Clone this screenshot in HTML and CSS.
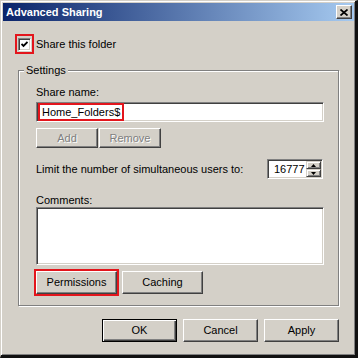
FILE: index.html
```html
<!DOCTYPE html>
<html lang="en">
<head>
    <meta charset="UTF-8">
    <meta name="viewport" content="width=device-width, initial-scale=1.0">
    <title>Advanced Sharing</title>
    <link rel="stylesheet" href="styles.css">
</head>
<body>
    <div class="window">
        <div class="titlebar">
            <span class="title">Advanced Sharing</span>
            <button class="close" aria-label="Close">
                <svg width="8" height="7" viewBox="0 0 8 7"><path d="M0.5 0.5 L7.5 6.5 M7.5 0.5 L0.5 6.5" stroke="#000" stroke-width="1.7" fill="none"/></svg>
            </button>
        </div>
        <div class="content">
            <div class="share-row">
                <span class="hl-box">
                    <span class="checkbox">
                        <svg width="7" height="7" viewBox="0 0 7 7"><path d="M0.5 3 L2.5 5 L6.5 1" stroke="#000" stroke-width="1.8" fill="none"/></svg>
                    </span>
                </span>
                <span class="share-text">Share this folder</span>
            </div>

            <fieldset class="group">
                <legend>Settings</legend>
                <div class="label">Share name:</div>
                <div class="field name-field"><span class="hl">Home_Folders$</span></div>
                <div class="btn-row">
                    <button class="btn small" disabled>Add</button>
                    <button class="btn small" disabled>Remove</button>
                </div>
                <div class="limit-row">
                    <span>Limit the number of simultaneous users to:</span>
                    <div class="field spinner">
                        <span class="spin-text">16777</span>
                        <span class="spin-btns">
                            <span class="spin-btn"><svg width="5" height="3" viewBox="0 0 5 3"><path d="M2.5 0 L5 3 L0 3 Z" fill="#000"/></svg></span>
                            <span class="spin-btn"><svg width="5" height="3" viewBox="0 0 5 3"><path d="M0 0 L5 0 L2.5 3 Z" fill="#000"/></svg></span>
                        </span>
                    </div>
                </div>
                <div class="label comments-label">Comments:</div>
                <div class="field comments"></div>
                <div class="btn-row perm-row">
                    <button class="btn mid hl-btn">Permissions</button>
                    <button class="btn mid">Caching</button>
                </div>
            </fieldset>

            <div class="footer">
                <button class="btn big default">OK</button>
                <button class="btn big">Cancel</button>
                <button class="btn big">Apply</button>
            </div>
        </div>
    </div>
</body>
</html>
```

FILE: styles.css
```css
body {
    margin: 0;
    font-family: 'Liberation Sans', Arial, sans-serif;
    font-size: 11px;
    line-height: 13px;
    color: #000;
}
.window {
    width: 358px;
    height: 358px;
    box-sizing: border-box;
    background: #d4d0c8;
    border-style: solid;
    border-width: 1px 3px 3px 1px;
    border-color: #d4d0c8 #111 #111 #d4d0c8;
    box-shadow: inset 1px 1px #fff, inset -1px -1px #808080;
    padding: 2px 1px 0 2px;
}
.titlebar {
    height: 18px;
    display: flex;
    align-items: center;
    justify-content: space-between;
    background: linear-gradient(to right, #0a246a, #a6caf0);
    padding-left: 3px;
}
.title {
    color: #fff;
    font-weight: bold;
}
.close {
    width: 16px;
    height: 14px;
    margin-right: 2px;
    padding: 0;
    display: flex;
    align-items: center;
    justify-content: center;
    background: #d4d0c8;
    border: 1px solid;
    border-color: #fff #404040 #404040 #fff;
    box-shadow: inset -1px -1px #808080;
}
.content {
    padding: 13px 0 0 12px;
}
.share-row {
    display: flex;
    align-items: center;
    height: 20px;
}
.hl-box {
    width: 19px;
    height: 20px;
    box-sizing: border-box;
    border: 2px solid #e3151c;
    display: flex;
    align-items: center;
    justify-content: center;
}
.checkbox {
    width: 13px;
    height: 13px;
    box-sizing: border-box;
    background: #fff;
    border: 1px solid;
    border-color: #808080 #fff #fff #808080;
    box-shadow: inset 1px 1px #404040, inset -1px -1px #d4d0c8;
    display: flex;
    align-items: center;
    justify-content: center;
}
.share-text {
    margin-left: 2px;
}
.group {
    margin: 10px 0 0 3px;
    width: 321px;
    box-sizing: border-box;
    padding: 0 0 11px 17px;
    border: 1px solid #808080;
    box-shadow: inset 1px 1px #fff, 1px 1px #fff;
}
.group legend {
    padding: 0 2px;
    margin-left: -12px;
    background: #d4d0c8;
}
.label {
    margin-top: 9px;
}
.field {
    box-sizing: border-box;
    background: #fff;
    border: 1px solid;
    border-color: #808080 #fff #fff #808080;
    box-shadow: inset 1px 1px #404040, inset -1px -1px #d4d0c8;
}
.name-field {
    margin-top: 3px;
    width: 288px;
    height: 20px;
    display: flex;
    padding-left: 1px;
}
.hl {
    border: 2px solid #e3151c;
    padding: 0 2px;
    display: flex;
    align-items: center;
}
.btn {
    font: inherit;
    color: #000;
    padding: 0;
    background: #d4d0c8;
    border: 1px solid;
    border-color: #fff #404040 #404040 #fff;
    box-shadow: inset -1px -1px #808080;
}
.btn:disabled {
    color: #808080;
    text-shadow: 1px 1px #fff;
}
.btn-row {
    display: flex;
    gap: 1px;
    margin-top: 6px;
}
.small { width: 62px; height: 20px; }
.mid { width: 81px; height: 23px; }
.big { width: 75px; height: 23px; }
.limit-row {
    margin-top: 11px;
    width: 287px;
    display: flex;
    align-items: center;
    justify-content: space-between;
}
.spinner {
    width: 56px;
    height: 20px;
    display: flex;
    padding: 1px;
}
.spin-text {
    flex: 1;
    overflow: hidden;
    white-space: nowrap;
    padding-left: 5px;
    line-height: 16px;
}
.spin-btns {
    width: 15px;
    display: flex;
    flex-direction: column;
}
.spin-btn {
    flex: 1;
    box-sizing: border-box;
    background: #d4d0c8;
    border: 1px solid;
    border-color: #d4d0c8 #404040 #404040 #d4d0c8;
    box-shadow: inset 1px 1px #fff, inset -1px -1px #808080;
    display: flex;
    align-items: center;
    justify-content: center;
}
.comments-label {
    margin-top: 15px;
}
.comments {
    width: 288px;
    height: 58px;
}
.perm-row {
    gap: 5px;
}
.hl-btn {
    outline: 2px solid #e3151c;
}
.footer {
    margin: 13px 0 0 3px;
    width: 321px;
    display: flex;
    justify-content: flex-end;
    gap: 6px;
}
.default {
    border: 1px solid #000;
    box-shadow: inset 1px 1px #fff, inset -1px -1px #404040, inset -2px -2px #808080;
}
```
